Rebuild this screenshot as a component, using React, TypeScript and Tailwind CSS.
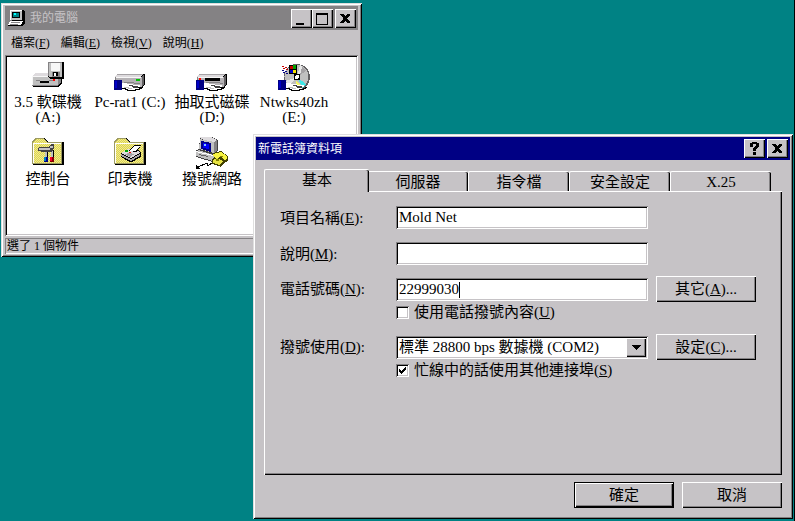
import { useState } from 'react';
import type { ReactNode } from 'react';

const RAISED_WINDOW =
  'bg-[#c6c3c6] shadow-[inset_1px_1px_0_#dfdfdf,inset_-1px_-1px_0_#000,inset_2px_2px_0_#fff,inset_-2px_-2px_0_#808080]';
const RAISED = 'bg-[#c6c3c6] shadow-[inset_1px_1px_0_#fff,inset_-1px_-1px_0_#000,inset_-2px_-2px_0_#848284]';
const RAISED_DEFAULT =
  'bg-[#c6c3c6] shadow-[inset_0_0_0_1px_#000,inset_2px_2px_0_#fff,inset_-2px_-2px_0_#000,inset_-3px_-3px_0_#848284]';
const SUNKEN =
  'bg-white shadow-[inset_1px_1px_0_#848284,inset_-1px_-1px_0_#fff,inset_2px_2px_0_#000,inset_-2px_-2px_0_#c6c3c6]';

const Hotkey = ({ text, letter }: { text: string; letter: string }) => (
  <>
    {text}(<u>{letter}</u>)
  </>
);

const Hand = () => (
  <>
    <path d="M8 23h3l3 1h3l3 1h6v2h-3l-1 1h2v1h-3v1H12l-4-2z" fill="#fff" />
    <path d="M8 28h3v1h2v1h8v-1h4v-1h2v-1h2" fill="none" stroke="#000" />
    <path d="M15 25h3v1h5v1h-4" fill="none" stroke="#424142" />
    <path d="M10 27h4v1h4" fill="none" stroke="#c0c0c0" />
    <path d="M0 20h8v10H0z" fill="#000084" />
    <path d="M1 21h2v7H1z" fill="#0000c6" />
  </>
);

const DriveBody = () => (
  <>
    <path d="M3 14h27l1 1v9l-3 4H1V17z" fill="#000" />
    <path d="M3 14h26l-2 3H1z" fill="#dedbde" />
    <path d="M1 17h27v10H1z" fill="#b5b2b5" />
    <path d="M28 16l2-1v9l-2 3z" fill="#636163" />
    <path d="M3 14h26v1H3z" fill="#a5a2a5" />
    <path d="M1 17h26v1H1z" fill="#f7f7f7" />
    <path d="M1 17h1v4H1z" fill="#848284" />
  </>
);

const Folder = ({ children }: { children: ReactNode }) => (
  <>
    <defs>
      <pattern id="dither" width="2" height="2" patternUnits="userSpaceOnUse">
        <path d="M0 0h2v2H0z" fill="#f7ef84" />
        <path d="M0 0h1v1H0zM1 1h1v1H1z" fill="#d6cf5a" />
      </pattern>
    </defs>
    <path d="M1 28V5l2-3 1-1h9l3 4h15l1 1v22z" fill="#000" />
    <path d="M0 27V5l3-4h9l3 4h15v22z" fill="#9c9a63" />
    <path d="M1 26V5l3-3h8l3 4h14v20z" fill="url(#dither)" />
    <path d="M1 26V6h28v1H2v19z" fill="#fff" />
    {children}
  </>
);

function ComputerIcon() {
  return (
    <svg viewBox="0 0 18 18" className="h-[18px] w-[18px]" shapeRendering="crispEdges" aria-hidden="true">
      <path d="M3 1h12l2 1v10H5L3 11z" fill="#000" />
      <path d="M2 1h12v10H2z" fill="#c0c0c0" />
      <path d="M2 1h12v1H3v9H2z" fill="#fff" />
      <path d="M4 3h8v6H4z" fill="#000" />
      <path d="M5 4h6v4H5z" fill="#008284" />
      <path d="M6 4h2v2H6z" fill="#00ffff" />
      <path d="M2 12h15v2l-2 3H0z" fill="#000" />
      <path d="M2 12h13l-2 4H0z" fill="#fff" />
      <path d="M3 13h9v1H3zM2 15h8v1H2z" fill="#848284" />
    </svg>
  );
}

const drawings: Record<string, ReactNode> = {
  floppy: (
    <>
      <path d="M3 13h25l2 2v8l-3 4H1l-1-1V16z" fill="#000" />
      <path d="M3 13h25l-2 3H0z" fill="#dedbde" />
      <path d="M0 16h26v10H0z" fill="#c0c0c0" />
      <path d="M0 16h26v1H1v9H0z" fill="#f7f7f7" />
      <path d="M26 16l3-3v9l-3 4z" fill="#848284" />
      <path d="M8 21h9v2H8z" fill="#000" />
      <path d="M4 20h4v1H4zM17 20h4v1h-4zM0 25h26v1H0z" fill="#848284" />
      <path d="M21 19h2v2h-2z" fill="#f00" />
      <path d="M17 2h14l1 1v15l-1 1H18l-2-2z" fill="#000" />
      <path d="M16 2h14v15H18l-2-1z" fill="#c0c0c0" />
      <path d="M19 3h9v8h-9z" fill="#f7f7f7" />
      <path d="M20 12h8v5h-8z" fill="#848284" />
      <path d="M21 12h5v4h-5z" fill="#000" />
      <path d="M22 13h2v3h-2z" fill="#fff" />
      <path d="M16 2h1v14h-1zM17 2h13v1H17z" fill="#848284" />
    </>
  ),
  disk: (
    <>
      <DriveBody />
      <path d="M22 19h4v2h-4z" fill="#00c300" />
      <path d="M10 22h10v1H10zM20 23h6v1h-6z" fill="#848284" />
      <Hand />
    </>
  ),
  removable: (
    <>
      <DriveBody />
      <path d="M9 18h15v3H9z" fill="#000" />
      <path d="M3 18h2v2H3z" fill="#f00" />
      <path d="M24 23h3v1h-3zM10 22h14v1H10z" fill="#848284" />
      <Hand />
    </>
  ),
  cdrom: (
    <>
      <circle cx="19" cy="17" r="13" fill="#636163" />
      <circle cx="18.5" cy="16.5" r="12" fill="#c0c0c0" />
      <path d="M19 17L22 5l5 4z" fill="#e7e7e7" />
      <path d="M19 17L11 25l-4-4z" fill="#e7e7e7" />
      <path d="M20 18l8 6-4 4z" fill="#42e7e7" />
      <path d="M18 20l5 6h-5z" fill="#f7f763" />
      <path d="M24 7l4 4-6 4z" fill="#a5a2a5" />
      <circle cx="19" cy="17" r="3.5" fill="#000" />
      <circle cx="19" cy="17" r="2" fill="#fff" />
      <path d="M11 5h8v9h-8z" fill="#000" />
      <path d="M12 6h3v3h-3z" fill="#c60000" />
      <path d="M15 5h3v4h-3z" fill="#00a200" />
      <path d="M12 10h3v3h-3z" fill="#0000c6" />
      <path d="M15 10h3v3h-3z" fill="#f7e300" />
      <path d="M4 6h2v1H4zM7 7h2v1H7zM5 8h2v1H5zM8 9h2v1H8z" fill="#c60000" />
      <path d="M4 10h2v1H4zM7 11h2v1H7zM5 12h2v1H5zM8 13h2v1H8z" fill="#000084" />
      <Hand />
    </>
  ),
  control: (
    <Folder>
      <path d="M13 13h3v8h-3zM19 13h3v8h-3z" fill="#000" />
      <path d="M13 13h2v7h-2zM19 11h2v9h-2z" fill="#c0c0c0" />
      <path d="M6 11l2-1h9l2-3h3v4l-2 4H9v-1H6z" fill="#424142" />
      <path d="M7 11h11v2H7z" fill="#c6c3c6" />
      <path d="M18 9h3v2h-3z" fill="#c0c0c0" />
      <path d="M12 20h4v5h-4z" fill="#000084" />
      <path d="M12 20h2v4h-2z" fill="#0082c6" />
      <path d="M18 20h4v5h-4z" fill="#840000" />
      <path d="M18 20h2v4h-2z" fill="#f7002a" />
    </Folder>
  ),
  printer: (
    <Folder>
      <path d="M7 16l7-4h9l4 4v4l-9 5h-2l-9-5z" fill="#000" />
      <path d="M7 16l7-4h8l4 4-9 5z" fill="#dedbde" />
      <path d="M7 17l10 5 9-5v2l-9 5-10-5z" fill="#a5a2a5" />
      <path d="M15 14l5-6h7l-4 7z" fill="#000" />
      <path d="M16 14l4-5h6l-4 5z" fill="#fff" />
      <path d="M10 17l6 3 5-3-6-1z" fill="#a5a2a5" />
      <path d="M11 13h3v2h-3z" fill="#00a200" />
      <path d="M15 15h2v1h-2z" fill="#f00" />
    </Folder>
  ),
  dialup: (
    <>
      <path d="M0 13l4-1 14 4 4-1v6l-5 4L0 20z" fill="#424142" />
      <path d="M0 14l3-1 14 5 4-2v4l-4 4L0 19z" fill="#c0c0c0" />
      <path d="M0 14l17 4v1L0 15z" fill="#fff" />
      <path d="M3 17l9 2v1l-9-2z" fill="#636163" />
      <path d="M4 0h12l6 3v11l-3 2L3 13z" fill="#424142" />
      <path d="M4 0h11l6 3-3 2L5 2z" fill="#dedbde" />
      <path d="M4 2l14 3v11L3 12z" fill="#c0c0c0" />
      <path d="M18 5l3-2v11l-3 2z" fill="#848284" />
      <path d="M5 4l10 2v9L5 12z" fill="#000084" />
      <path d="M7 6l6 1v5l-6-1z" fill="#0000f7" />
      <path d="M8 7h2v2H8z" fill="#84c3ff" />
      <path d="M17 16l8-2 7 5v5l-3 1-4 5-9-3v-4l2-3z" fill="#424100" />
      <path d="M17 17l8-2 6 4v3l-3 1-3-3-5 1-2-1z" fill="#f7f342" />
      <path d="M17 23l4-2 6 3-3 4-7-2z" fill="#e7e342" />
      <path d="M20 22h3v2h-3zM24 19h3v1h-3z" fill="#848200" />
      <path d="M2 30l9-4 1 3 4-3" fill="none" stroke="#000" />
      <path d="M0 32v-4l4 4z" fill="#000" />
    </>
  ),
};

const items = [
  { art: 'floppy', lines: ['3.5 軟碟機', '(A:)'] },
  { art: 'disk', lines: ['Pc-rat1 (C:)'] },
  { art: 'removable', lines: ['抽取式磁碟', '(D:)'] },
  { art: 'cdrom', lines: ['Ntwks40zh', '(E:)'] },
  { art: 'control', lines: ['控制台'] },
  { art: 'printer', lines: ['印表機'] },
  { art: 'dialup', lines: ['撥號網路'] },
];

const menus = [
  { text: '檔案', letter: 'F' },
  { text: '編輯', letter: 'E' },
  { text: '檢視', letter: 'V' },
  { text: '說明', letter: 'H' },
];

const tabs = ['基本', '伺服器', '指令檔', '安全設定', 'X.25'];

const glyphs: Record<string, ReactNode> = {
  minimize: <path d="M5 14h8v2H5z" />,
  maximize: <path d="M4 4h12v12H4zM5 6v9h10V6z" fillRule="evenodd" />,
  close: <path d="M5 5h3l2 2 2-2h3v1l-3 3v1l3 3v1h-3l-2-2-2 2H5v-1l3-3V9L5 6z" />,
  help: <path d="M6 4h2V3h5v1h2v4h-1v1h-1v1h-1v2H9V9h1V8h1V7h1V5H9v3H6zM9 13h3v3H9z" />,
};

function CaptionButton({ kind, label }: { kind: string; label: string }) {
  return (
    <button type="button" aria-label={label} className={`h-[19px] w-[21px] ${RAISED}`}>
      <svg viewBox="0 0 21 19" className="h-[19px] w-[21px]" shapeRendering="crispEdges" aria-hidden="true">
        {glyphs[kind]}
      </svg>
    </button>
  );
}

function MyComputer() {
  return (
    <section className={`absolute left-px right-[433px] top-[3px] px-1 py-[3px] ${RAISED_WINDOW}`}>
      <header className="flex h-6 items-center bg-[#848284] pl-[3px] pr-0.5 text-xs text-[#c6c3c6]">
        <ComputerIcon />
        <h1 className="ml-1 flex-1">我的電腦</h1>
        <CaptionButton kind="minimize" label="最小化" />
        <CaptionButton kind="maximize" label="最大化" />
        <div className="ml-0.5 flex">
          <CaptionButton kind="close" label="關閉" />
        </div>
      </header>
      <nav className="flex h-[25px] items-center gap-[11px] pl-1.5 text-xs">
        {menus.map((menu) => (
          <button key={menu.letter} type="button" className="whitespace-nowrap">
            <Hotkey {...menu} />
          </button>
        ))}
      </nav>
      <div className={`grid min-h-[181px] auto-rows-[77px] grid-cols-[repeat(auto-fill,82px)] px-0.5 pt-[5px] ${SUNKEN}`}>
        {items.map((item) => (
          <button key={item.art} type="button" className="flex flex-col items-center gap-[3px] text-[15px] leading-[15px]">
            <svg viewBox="0 0 32 32" className="h-8 w-8 shrink-0" shapeRendering="crispEdges" aria-hidden="true">
              {drawings[item.art]}
            </svg>
            <span>
              {item.lines.map((line) => (
                <span key={line} className="block whitespace-nowrap">
                  {line}
                </span>
              ))}
            </span>
          </button>
        ))}
      </div>
      <footer className="mt-0.5 h-4 px-0.5 text-xs leading-4 shadow-[inset_1px_1px_0_#848284,inset_-1px_-1px_0_#fff]">
        選了 1 個物件
      </footer>
    </section>
  );
}

function CheckBox({ id, text, letter, initial }: { id: string; text: string; letter: string; initial: boolean }) {
  const [checked, setChecked] = useState(initial);

  return (
    <div className="col-start-2 flex h-5 items-center gap-[5px]">
      <span className="relative flex">
        <input
          id={id}
          type="checkbox"
          checked={checked}
          onChange={(e) => setChecked(e.target.checked)}
          className={`h-[13px] w-[13px] appearance-none ${SUNKEN}`}
        />
        {checked && (
          <svg
            viewBox="0 0 13 13"
            className="pointer-events-none absolute inset-0 h-[13px] w-[13px]"
            shapeRendering="crispEdges"
            aria-hidden="true"
          >
            <path d="M3 5h1v1h1v1h1V6h1V5h1V4h1V3h1v3H9v1H8v1H7v1H6v1H5V9H4V8H3z" />
          </svg>
        )}
      </span>
      <label htmlFor={id} className="whitespace-nowrap">
        <Hotkey text={text} letter={letter} />
      </label>
    </div>
  );
}

const FieldLabel = ({ id, text, letter }: { id: string; text: string; letter: string }) => (
  <label htmlFor={id} className="col-start-1 whitespace-nowrap">
    <Hotkey text={text} letter={letter} />:
  </label>
);

function PhonebookEntry() {
  const [name, setName] = useState('Mold Net');
  const [comment, setComment] = useState('');
  const [phone, setPhone] = useState('22999030');
  const field = `h-[23px] w-full min-w-0 px-[3px] outline-none ${SUNKEN}`;

  return (
    <section className={`absolute left-[253px] right-0.5 top-[134px] p-[3px] text-[15px] leading-5 ${RAISED_WINDOW}`}>
      <header className="flex h-[23px] items-center gap-0.5 bg-[#000084] pl-0.5 pr-0.5 text-xs text-white">
        <h2 className="flex-1">新電話簿資料項</h2>
        <CaptionButton kind="help" label="說明" />
        <CaptionButton kind="close" label="關閉" />
      </header>

      <form className="px-2 pb-2 pt-[9px]" onSubmit={(e) => e.preventDefault()}>
        <div role="tablist" className="flex h-[22px] items-end pl-0.5 pr-[11px]">
          {tabs.map((tab, index) => (
            <button
              key={tab}
              type="button"
              role="tab"
              aria-selected={index === 0}
              className={
                index === 0
                  ? 'relative z-10 -mx-0.5 -mb-px h-[23px] flex-[105] rounded-t-[2px] border-l border-t border-white bg-[#c6c3c6] pb-1 shadow-[inset_-1px_0_0_#000,inset_-2px_0_0_#848284]'
                  : 'h-5 flex-[101] rounded-t-[2px] border-l border-t border-white shadow-[inset_-1px_0_0_#000,inset_-2px_0_0_#848284]'
              }
            >
              {tab}
            </button>
          ))}
        </div>

        <div
          role="tabpanel"
          className="grid grid-cols-[108px_1fr_100px] items-center gap-x-2 pb-[95px] pl-4 pr-[26px] pt-[15px] shadow-[inset_1px_1px_0_#fff,inset_-1px_-1px_0_#000,inset_-2px_-2px_0_#848284]"
        >
          <FieldLabel id="name" text="項目名稱" letter="E" />
          <input id="name" value={name} onChange={(e) => setName(e.target.value)} className={field} />
          <div className="col-span-3 h-[13px]" />

          <FieldLabel id="comment" text="說明" letter="M" />
          <input id="comment" value={comment} onChange={(e) => setComment(e.target.value)} className={field} />
          <div className="col-span-3 h-[11px]" />

          <FieldLabel id="phone" text="電話號碼" letter="N" />
          <div className="relative">
            <input id="phone" value={phone} onChange={(e) => setPhone(e.target.value)} className={`block caret-transparent ${field}`} />
            <span
              className="pointer-events-none absolute top-1 h-4 w-px bg-black"
              style={{ left: `calc(3px + ${phone.length}ch)` }}
            />
          </div>
          <button type="button" className={`h-[26px] ${RAISED}`}>
            <Hotkey text="其它" letter="A" />
            ...
          </button>
          <CheckBox id="dialing" text="使用電話撥號內容" letter="U" initial={false} />
          <div className="col-span-3 h-3" />

          <FieldLabel id="device" text="撥號使用" letter="D" />
          <div className="relative">
            <select id="device" className={`block appearance-none pr-6 ${field}`}>
              <option>標準 28800 bps 數據機 (COM2)</option>
            </select>
            <span className={`pointer-events-none absolute bottom-0.5 right-0.5 top-0.5 flex w-5 items-center justify-center ${RAISED}`}>
              <svg viewBox="0 0 9 5" className="h-[5px] w-[9px]" shapeRendering="crispEdges" aria-hidden="true">
                <path d="M0 0h9v1H8v1H7v1H6v1H5v1H4V4H3V3H2V2H1V1H0z" />
              </svg>
            </span>
          </div>
          <button type="button" className={`h-[26px] ${RAISED}`}>
            <Hotkey text="設定" letter="C" />
            ...
          </button>
          <CheckBox id="other" text="忙線中的話使用其他連接埠" letter="S" initial />
        </div>

        <div className="mt-[7px] flex justify-end gap-2">
          <button type="submit" className={`h-[26px] w-[100px] ${RAISED_DEFAULT}`}>
            確定
          </button>
          <button type="button" className={`h-[26px] w-[100px] ${RAISED}`}>
            取消
          </button>
        </div>
      </form>
    </section>
  );
}

export default function App() {
  return (
    <main className="relative min-h-screen overflow-hidden bg-[#008284] font-['Liberation_Serif','Noto_Sans_CJK_TC',serif] text-black shadow-[inset_-1px_0_0_#000]">
      <MyComputer />
      <PhonebookEntry />
    </main>
  );
}
